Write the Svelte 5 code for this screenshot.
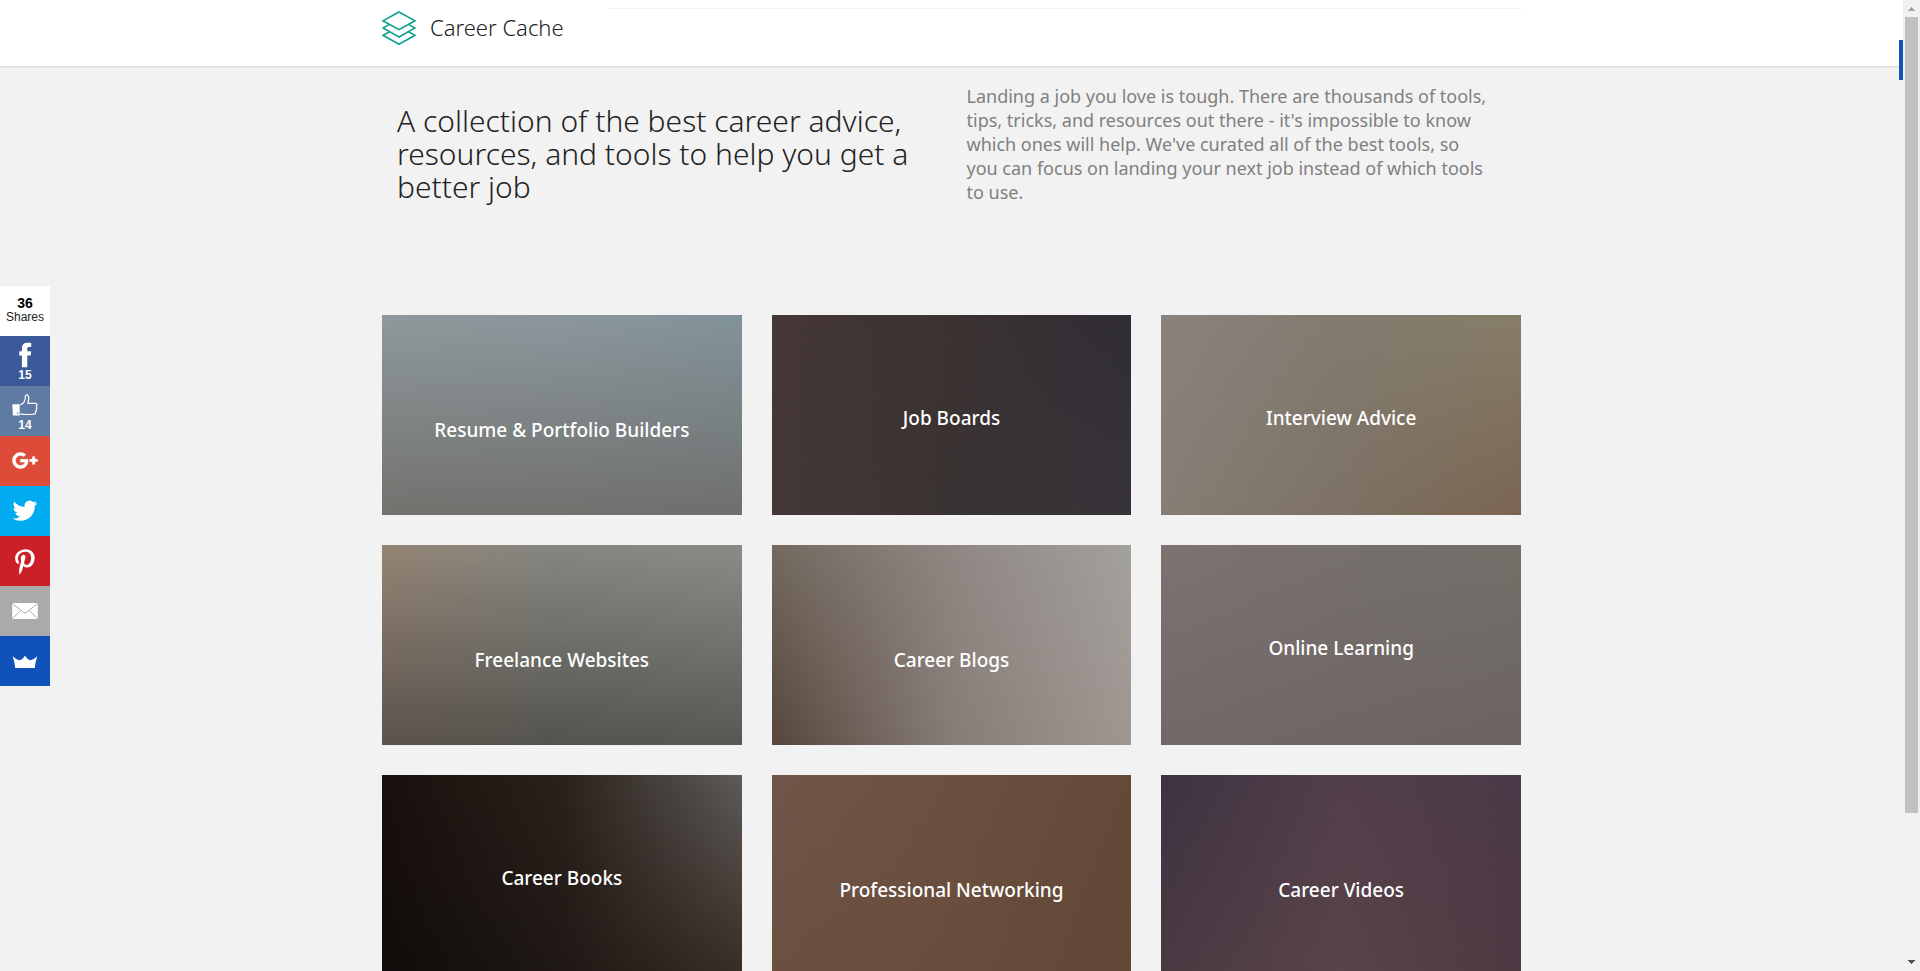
<script>
  const cards = [
    { title: 'Resume & Portfolio Builders', low: true, top: '#8f999c, #8c979d, #82949b', bottom: '#72726e, #71716e, #6f6f6d' },
    { title: 'Job Boards', low: false, top: '#453836, #3c3332, #302d35', bottom: '#443837, #3a3333, #38343a' },
    { title: 'Interview Advice', low: false, top: '#8b837e, #827c70, #877e69', bottom: '#867d74, #7d7165, #7a6550' },
    { title: 'Freelance Websites', low: true, top: '#958575, #868782, #8a8d87', bottom: '#5c524c, #53544e, #575855' },
    { title: 'Career Blogs', low: true, top: '#746a60, #908783, #a3a19d', bottom: '#56463b, #867c77, #a09691' },
    { title: 'Online Learning', low: false, top: '#7e7371, #77706e, #737069', bottom: '#726867, #6e6664, #6c6361' },
    { title: 'Career Books', low: false, top: '#1a100d, #2b221c, #5f5b58', bottom: '#100c0b, #1f1814, #382d26' },
    { title: 'Professional Networking', low: true, top: '#705749, #6b5141, #644a39', bottom: '#6b5042, #694d3c, #634635' },
    { title: 'Career Videos', low: true, top: '#3d3341, #523f4b, #4b3a48', bottom: '#4a3a42, #5a444a, #4f3842' }
  ];
</script>

<div class="page">
  <header class="topbar">
    <div class="container bar">
      <a class="brand" href="#home">
        <svg width="34" height="34" viewBox="0 0 34 34" fill="none" stroke="#0fa08c" stroke-width="1.6" aria-hidden="true">
          <path d="M17 1 33 9.8 17 18.6 1 9.8z" />
          <path d="M7.5 13.4 1 17l16 9 16-9-6.500-3.600" />
          <path d="M7.500 20.700 1 24.300l16 8.900 16-8.900-6.500-3.600" />
        </svg>
        <span>Career Cache</span>
      </a>
      <div class="rule"></div>
    </div>
  </header>

  <main class="container">
    <section class="hero">
      <h1>A collection of the best career advice, resources, and tools to help you get a better job</h1>
      <p>
        Landing a job you love is tough. There are thousands of tools,
        tips, tricks, and resources out there - it's impossible to know
        which ones will help. We've curated all of the best tools, so
        you can focus on landing your next job instead of which tools
        to use.
      </p>
    </section>
    <nav class="grid" aria-label="Categories">
      {#each cards as card}
        <a class="card" class:low={card.low} href="#category" style="--top: {card.top}; --bottom: {card.bottom}">
          <span>{card.title}</span>
        </a>
      {/each}
    </nav>
  </main>
</div>

<aside class="share" aria-label="Share">
  <div class="total"><strong>36</strong><span>Shares</span></div>
  <button class="facebook" aria-label="Facebook, 15">
    <svg viewBox="0 0 50 33"><path d="M31.200 6.900v4.200h-2.300c-1.300 0-1.600.7-1.600 1.700v2.500h3.900l-.5 4.300h-3.400v11.700h-5.400V19.600h-2.700v-4.300h2.700v-3c0-3.600 1.900-5.500 5.400-5.500 1.500 0 3 0 3.900.1z" /></svg>
    <span>15</span>
  </button>
  <button class="like" aria-label="Like, 14">
    <svg viewBox="0 0 50 33">
      <path d="M12.300 18.200h7.400v11.200h-6.800z" />
      <path fill="none" stroke="#fff" stroke-width="1.200" stroke-linejoin="round" d="M20.300 19c3-1.200 4.800-4.200 5-7.200.1-2 .5-3.100 1.700-2.900 1.900.3 2.400 3.400.8 8.400h7.600c1.800 0 2.100 2.200.9 3 1 .8.900 2.300-.3 2.900.8.900.5 2.300-.6 2.700.4 1.300-.3 2.300-1.700 2.300-4.400.3-8.600.7-13.400-.3" />
      <circle cx="17.700" cy="27.300" r=".8" fill="#5f7aa3" />
    </svg>
    <span>14</span>
  </button>
  <button class="google" aria-label="Google Plus">
    <svg viewBox="0 0 50 50"><path stroke="#fff" stroke-width=".5" transform="translate(12.500 12) scale(1.040)" d="M7.635 10.909v2.619h4.335c-.173 1.125-1.310 3.295-4.331 3.295-2.604 0-4.731-2.160-4.731-4.823 0-2.662 2.122-4.822 4.728-4.822 1.485 0 2.479.633 3.045 1.178l2.073-1.994c-1.330-1.245-3.056-1.995-5.115-1.995C3.412 4.365 0 7.785 0 12s3.414 7.635 7.635 7.635c4.410 0 7.332-3.098 7.332-7.461 0-.501-.054-.885-.120-1.265H7.635zm16.365 0h-2.600V8.300h-2.183v2.609h-2.600v2.184h2.600v2.600h2.183v-2.600H24z" /></svg>
  </button>
  <button class="twitter" aria-label="Twitter">
    <svg viewBox="0 0 50 50"><path transform="translate(12.600 12.400) scale(1.030)" d="M23.953 4.570a10 10 0 0 1-2.825.775 4.958 4.958 0 0 0 2.163-2.723c-.951.555-2.005.959-3.127 1.184a4.920 4.920 0 0 0-8.384 4.482C7.690 8.095 4.067 6.130 1.640 3.162a4.822 4.822 0 0 0-.666 2.475c0 1.710.870 3.213 2.188 4.096a4.904 4.904 0 0 1-2.228-.616v.060a4.923 4.923 0 0 0 3.946 4.827 4.996 4.996 0 0 1-2.212.085 4.936 4.936 0 0 0 4.604 3.417 9.867 9.867 0 0 1-6.102 2.105c-.390 0-.779-.023-1.170-.067a13.995 13.995 0 0 0 7.557 2.209c9.053 0 13.998-7.496 13.998-13.985 0-.210 0-.420-.015-.630A9.935 9.935 0 0 0 24 4.590z" /></svg>
  </button>
  <button class="pinterest" aria-label="Pinterest">
    <svg viewBox="0 0 50 50"><path transform="translate(15.100 12.800) scale(.051)" d="M204 6.500C101.400 6.500 0 74.900 0 185.600 0 256 39.600 296 63.600 296c9.900 0 15.600-27.600 15.600-35.400 0-9.300-23.700-29.100-23.700-67.800 0-80.400 61.200-137.400 140.400-137.400 68.100 0 118.500 38.700 118.500 109.800 0 53.100-21.300 152.700-90.300 152.700-24.900 0-46.200-18-46.200-43.800 0-37.800 26.400-74.400 26.400-113.400 0-66.200-93.900-54.200-93.900 25.800 0 16.800 2.100 35.400 9.600 50.700-13.800 59.400-42 147.900-42 209.100 0 18.900 2.700 37.500 4.500 56.400 3.400 3.800 1.700 3.400 6.900 1.500 50.400-69 48.600-82.500 71.400-172.800 12.300 23.400 44.100 36 69.300 36 106.200 0 153.900-103.500 153.900-196.800C384 71.300 298.200 6.500 204 6.500z" /></svg>
  </button>
  <button class="email" aria-label="Email">
    <svg viewBox="0 0 50 50">
      <rect x="12.200" y="17" width="25.600" height="16" rx="1.800" />
      <path fill="none" stroke="#aaa" stroke-width="1" d="m13.300 18.200 10.200 8.200q1.500 1.100 3 0l10.200-8.200M13.300 31.800l7.400-7.200M36.700 31.800l-7.400-7.200" />
    </svg>
  </button>
  <button class="crown" aria-label="More sharing tools">
    <svg viewBox="0 0 50 50"><path d="M12.600 20.200c2.500 2.300 4.800 3.500 7.300 4 2.200-.9 3.900-2.600 5.100-4.800 1.200 2.200 2.900 3.900 5.100 4.800 2.500-.5 4.800-1.700 7.300-4-1.300 3.500-2.200 7.400-2.600 11.700H15.200c-.4-4.300-1.300-8.200-2.600-11.700z" /></svg>
  </button>
</aside>

<div class="tab"></div>
<div class="scroll" aria-hidden="true">
  <svg width="17" height="17" viewBox="0 0 17 17" shape-rendering="crispEdges"><path fill="#a3a3a3" d="M8 7h1v1h1v1h1v1h1v1H5v-1h1V9h1V8h1z" /></svg>
  <div class="thumb"></div>
  <svg width="17" height="17" viewBox="0 0 17 17" shape-rendering="crispEdges"><path fill="#505050" d="M5 6h7v1h-1v1h-1v1H9v1H8V9H7V8H6V7H5z" /></svg>
</div>

<style>
  :global(body) {
    background: #f2f2f2;
    overflow: hidden;
  }
  .page {
    height: 100vh;
    overflow: hidden;
    padding-right: 17px;
    box-sizing: border-box;
    background: #f2f2f2;
    font-family: "Noto Sans", "Open Sans", sans-serif;
    color: #333;
  }
  .container {
    max-width: 1139px;
    margin: 0 auto;
  }
  .topbar {
    height: 66px;
    background: #fff;
    border-bottom: 1px solid #dedede;
    box-shadow: 0 1px 1px #e9e9e9;
  }
  .bar {
    display: flex;
    align-items: flex-start;
  }
  .brand {
    display: flex;
    align-items: flex-start;
    gap: 14px;
    width: 228px;
    padding-top: 11px;
    color: #222;
    font-size: 22px;
    font-weight: 300;
    line-height: 32px;
    text-decoration: none;
  }
  .brand svg {
    flex: none;
  }
  .rule {
    flex: 1;
    margin-top: 8px;
    border-top: 1px solid #f0f0f0;
  }
  .hero {
    display: grid;
    grid-template-columns: 1fr 1fr;
    height: 248px;
  }
  h1 {
    margin: 0;
    padding: 37px 15px 0;
    color: #222;
    font-size: 30px;
    font-weight: 300;
    line-height: 33px;
  }
  p {
    margin: 0;
    padding: 17px 30px 0 15px;
    color: #808080;
    font-size: 18px;
    line-height: 24px;
  }
  .grid {
    display: grid;
    grid-template-columns: repeat(3, 1fr);
    gap: 30px;
  }
  .card {
    position: relative;
    display: flex;
    align-items: center;
    justify-content: center;
    height: 200px;
    padding-top: 6px;
    box-sizing: border-box;
    background: linear-gradient(to right, var(--top));
    color: #fff;
    font-size: 19px;
    font-weight: 500;
    line-height: 24px;
    text-decoration: none;
  }
  .card.low {
    padding-top: 30px;
  }
  .card::before {
    content: "";
    position: absolute;
    inset: 0;
    background: linear-gradient(to right, var(--bottom));
    mask-image: linear-gradient(to bottom, transparent, #000);
  }
  .card span {
    position: relative;
  }
  .share {
    position: fixed;
    left: 0;
    top: 286px;
    width: 50px;
    font-family: "Liberation Sans", Arial, sans-serif;
    font-size: 12px;
  }
  .total,
  .share button {
    display: flex;
    flex-direction: column;
    align-items: center;
    width: 50px;
    height: 50px;
    box-sizing: border-box;
  }
  .total {
    padding-top: 10px;
    background: #fff;
    color: #222;
    line-height: 14px;
  }
  .total strong {
    font-size: 14px;
    color: #000;
  }
  .share button {
    justify-content: flex-start;
    margin: 0;
    padding: 0;
    border: 0;
    color: #fff;
    font: bold 12px/12px "Liberation Sans", Arial, sans-serif;
    cursor: pointer;
  }
  .share svg {
    width: 50px;
    flex: none;
    fill: #fff;
  }
  .share .facebook { background: #3b5998; }
  .share .like { background: #5f7aa3; }
  .share .google { background: #dd4b39; }
  .share .twitter { background: #00abf0; }
  .share .pinterest { background: #cb2027; }
  .share .email { background: #aaa; }
  .share .crown { background: #0f52ba; }
  .tab {
    position: fixed;
    right: 17px;
    top: 40px;
    width: 4px;
    height: 40px;
    background: #0f52ba;
  }
  .scroll {
    position: fixed;
    top: 0;
    right: 0;
    bottom: 0;
    display: flex;
    flex-direction: column;
    width: 17px;
    background: #f1f1f1;
  }
  .scroll svg {
    flex: none;
  }
  .thumb {
    width: 13px;
    height: 82%;
    margin: 0 2px auto;
    background: #c1c1c1;
  }
</style>
